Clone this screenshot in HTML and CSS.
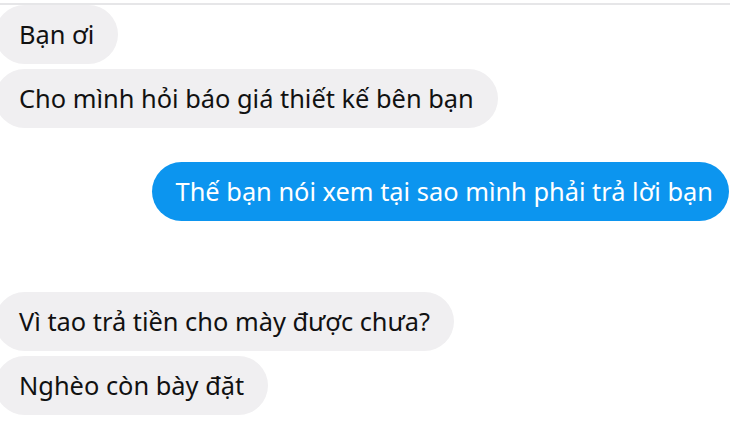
FILE: index.html
```html
<html>
<head>
<title>Tin nhắn</title>
<link rel="stylesheet" href="styles.css">
</head>
<body>
<div class="topline"></div>
<div class="thread">
  <div class="bubble in first">Bạn ơi</div>
  <div class="bubble in">Cho mình hỏi báo giá thiết kế bên bạn</div>
  <div class="bubble out">Thế bạn nói xem tại sao mình phải trả lời bạn</div>
  <div class="bubble in third">Vì tao trả tiền cho mày được chưa?</div>
  <div class="bubble in">Nghèo còn bày đặt</div>
</div>
</body>
</html>
```

FILE: styles.css
```css
body { margin:0; background:#fff; font-family:"Noto Sans", "Open Sans", sans-serif; font-size:25.4px; color:#111; overflow:hidden; }
.topline { margin-top:3px; height:2px; background:#e6e6e8; }
.thread { display:flex; flex-direction:column; align-items:flex-start; }
.bubble { box-sizing:border-box; height:59px; line-height:35px; padding:12px 24px; border-radius:30px; white-space:nowrap; margin-top:5px; }
.bubble.first { margin-top:0; }
.in { background:#f0eff1; margin-left:-5px; }
.out { background:#0c95ef; color:#fff; align-self:flex-end; margin-top:34px; margin-right:1px; padding:12px 16px 12px 24px; }
.third { margin-top:71px; }
```
